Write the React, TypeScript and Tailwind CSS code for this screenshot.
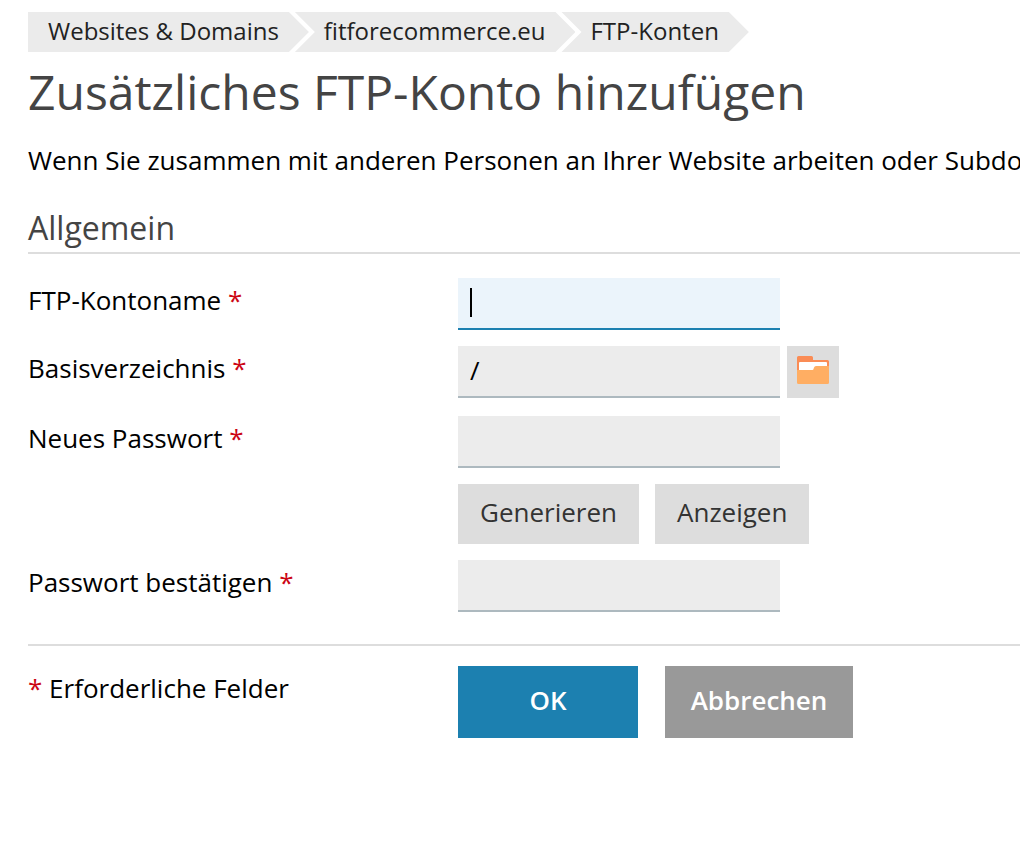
import type { ReactNode } from "react";

const crumbFirst =
  "[clip-path:polygon(0_0,calc(100%-20px)_0,100%_50%,calc(100%-20px)_100%,0_100%)] pl-5";
const crumbNext =
  "[clip-path:polygon(0_0,calc(100%-20px)_0,100%_50%,calc(100%-20px)_100%,0_100%,20px_50%)] -ml-3.5 pl-[29px]";

const crumbs = ["Websites & Domains", "fitforecommerce.eu", "FTP-Konten"];

function Required() {
  return <span className="font-medium text-[#cc0614]">*</span>;
}

function FieldRow({
  id,
  label,
  children,
}: {
  id: string;
  label: string;
  children: ReactNode;
}) {
  return (
    <div className="flex items-start">
      <label htmlFor={id} className="w-[430px] shrink-0 pt-1 leading-9">
        {label} <Required />
      </label>
      {children}
    </div>
  );
}

const inputClass =
  "h-[52px] w-[322px] border-b-2 border-[#adb9bf] bg-[#ececec] px-3 pb-0.5 outline-none";
const smallButton = "h-[60px] bg-[#dddddd] px-[22px] pb-1 text-[#333333]";

function FolderIcon() {
  return (
    <svg width="32" height="28" viewBox="0 0 32 28" aria-hidden="true">
      <path
        d="M1.5 0H14.5Q16 0 16 1.5V4H30.5Q32 4 32 5.500V16H0V1.500Q0 0 1.500 0Z"
        fill="#fa8c55"
      />
      <path d="M3 6H29Q30 6 30 7V14H2V7Q2 6 3 6Z" fill="#ffffff" />
      <path
        d="M0 14H15.500Q16.300 14 16.500 13L17 11.500Q17.500 10 19 10H32V26.500Q32 28 30.500 28H1.500Q0 28 0 26.500Z"
        fill="#ffae63"
      />
    </svg>
  );
}

export default function App() {
  return (
    <main className="overflow-hidden bg-white pt-3 pb-8 pl-7 font-['Open_Sans','Noto_Sans',sans-serif] text-[26px] text-black">
      <nav aria-label="Breadcrumb">
        <ol className="flex text-[24px] leading-[38px] text-[#222222]">
          {crumbs.map((name, i) => (
            <li
              key={name}
              className={`h-10 bg-[#ebebeb] pr-[30px] whitespace-nowrap ${i === 0 ? crumbFirst : crumbNext}`}
            >
              <a href="#">{name}</a>
            </li>
          ))}
        </ol>
      </nav>

      <h1 className="mt-2 text-[48px] leading-[64px] text-[#444444]">
        Zusätzliches FTP-Konto hinzufügen
      </h1>
      <p className="mt-[18px] leading-9 whitespace-nowrap">
        Wenn Sie zusammen mit anderen Personen an Ihrer Website arbeiten oder Subdo
      </p>

      <form onSubmit={(e) => e.preventDefault()}>
        <h2 className="mt-7 border-b-2 border-[#dddddd] pb-0.5 text-[32px] leading-[44px] text-[#444444]">
          Allgemein
        </h2>

        <div className="mt-6 flex flex-col gap-4">
          <FieldRow id="account" label="FTP-Kontoname">
            <div className="relative">
              <input
                id="account"
                type="text"
                autoFocus
                required
                className="block h-[52px] w-[322px] border-b-2 border-[#1c80b0] bg-[#ebf4fb] px-3 caret-transparent outline-none"
              />
              <span className="pointer-events-none absolute top-2.5 left-3 h-[29px] w-0.5 bg-black" />
            </div>
          </FieldRow>
          <FieldRow id="directory" label="Basisverzeichnis">
            <div className="flex gap-[7px] pb-0.5">
              <input
                id="directory"
                type="text"
                required
                defaultValue="/"
                className={inputClass}
              />
              <button
                type="button"
                aria-label="Verzeichnis wählen"
                className="flex size-[52px] items-center justify-center bg-[#dddddd] pb-1"
              >
                <FolderIcon />
              </button>
            </div>
          </FieldRow>
          <FieldRow id="password" label="Neues Passwort">
            <div className="flex flex-col gap-4">
              <input id="password" type="password" required className={inputClass} />
              <div className="flex gap-4">
                <button type="button" className={smallButton}>
                  Generieren
                </button>
                <button type="button" className={smallButton}>
                  Anzeigen
                </button>
              </div>
            </div>
          </FieldRow>
          <FieldRow id="confirm" label="Passwort bestätigen">
            <input id="confirm" type="password" required className={inputClass} />
          </FieldRow>
        </div>

        <div className="mt-8 flex items-start border-t-2 border-[#dddddd] pt-5">
          <p className="w-[430px] shrink-0 pt-1 leading-9">
            <Required /> Erforderliche Felder
          </p>
          <div className="flex gap-[27px] font-semibold text-white">
            <button type="submit" className="h-[72px] w-[180px] bg-[#1c80b0] pb-1">
              OK
            </button>
            <button type="button" className="h-[72px] w-[188px] bg-[#999999] pb-1">
              Abbrechen
            </button>
          </div>
        </div>
      </form>
    </main>
  );
}
